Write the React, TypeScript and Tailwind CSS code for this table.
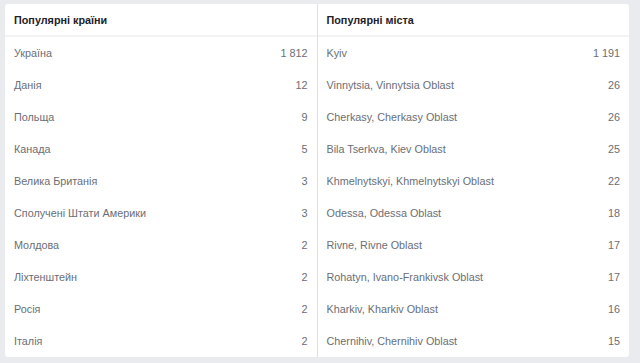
const countries: [string, string][] = [
  ["Україна", "1 812"],
  ["Данія", "12"],
  ["Польща", "9"],
  ["Канада", "5"],
  ["Велика Британія", "3"],
  ["Сполучені Штати Америки", "3"],
  ["Молдова", "2"],
  ["Ліхтенштейн", "2"],
  ["Росія", "2"],
  ["Італія", "2"],
];

const cities: [string, string][] = [
  ["Kyiv", "1 191"],
  ["Vinnytsia, Vinnytsia Oblast", "26"],
  ["Cherkasy, Cherkasy Oblast", "26"],
  ["Bila Tserkva, Kiev Oblast", "25"],
  ["Khmelnytskyi, Khmelnytskyi Oblast", "22"],
  ["Odessa, Odessa Oblast", "18"],
  ["Rivne, Rivne Oblast", "17"],
  ["Rohatyn, Ivano-Frankivsk Oblast", "17"],
  ["Kharkiv, Kharkiv Oblast", "16"],
  ["Chernihiv, Chernihiv Oblast", "15"],
];

const Column = ({ title, rows }: { title: string; rows: [string, string][] }) => {
  return (
    <div className="flex-1 flex flex-col">
      {/* Header */}
      <div className="h-[33px] flex items-center pt-[2px] px-[9px] border-b-2 border-[#f2f3f5] text-[10.8px] font-bold text-[#1d2129]">
        {title}
      </div>
      {/* Rows */}
      {rows.map(([name, value]) => (
        <div key={name} className="h-8 flex items-center justify-between px-[9px] text-[10.8px] text-[#6a6e75]">
          <span>{name}</span>
          <span>{value}</span>
        </div>
      ))}
    </div>
  );
};

const App = () => {
  return (
    <div className="w-[640px] h-[363px] bg-[#e9ebee] pt-1 pl-[5px] font-['Liberation_Sans'] antialiased">
      <div className="w-[624px] flex bg-white rounded-[3px] overflow-hidden">
        <Column title="Популярні країни" rows={countries} />
        <div className="w-px bg-[#dddfe2]" />
        <Column title="Популярні міста" rows={cities} />
      </div>
    </div>
  );
};

export default App;
